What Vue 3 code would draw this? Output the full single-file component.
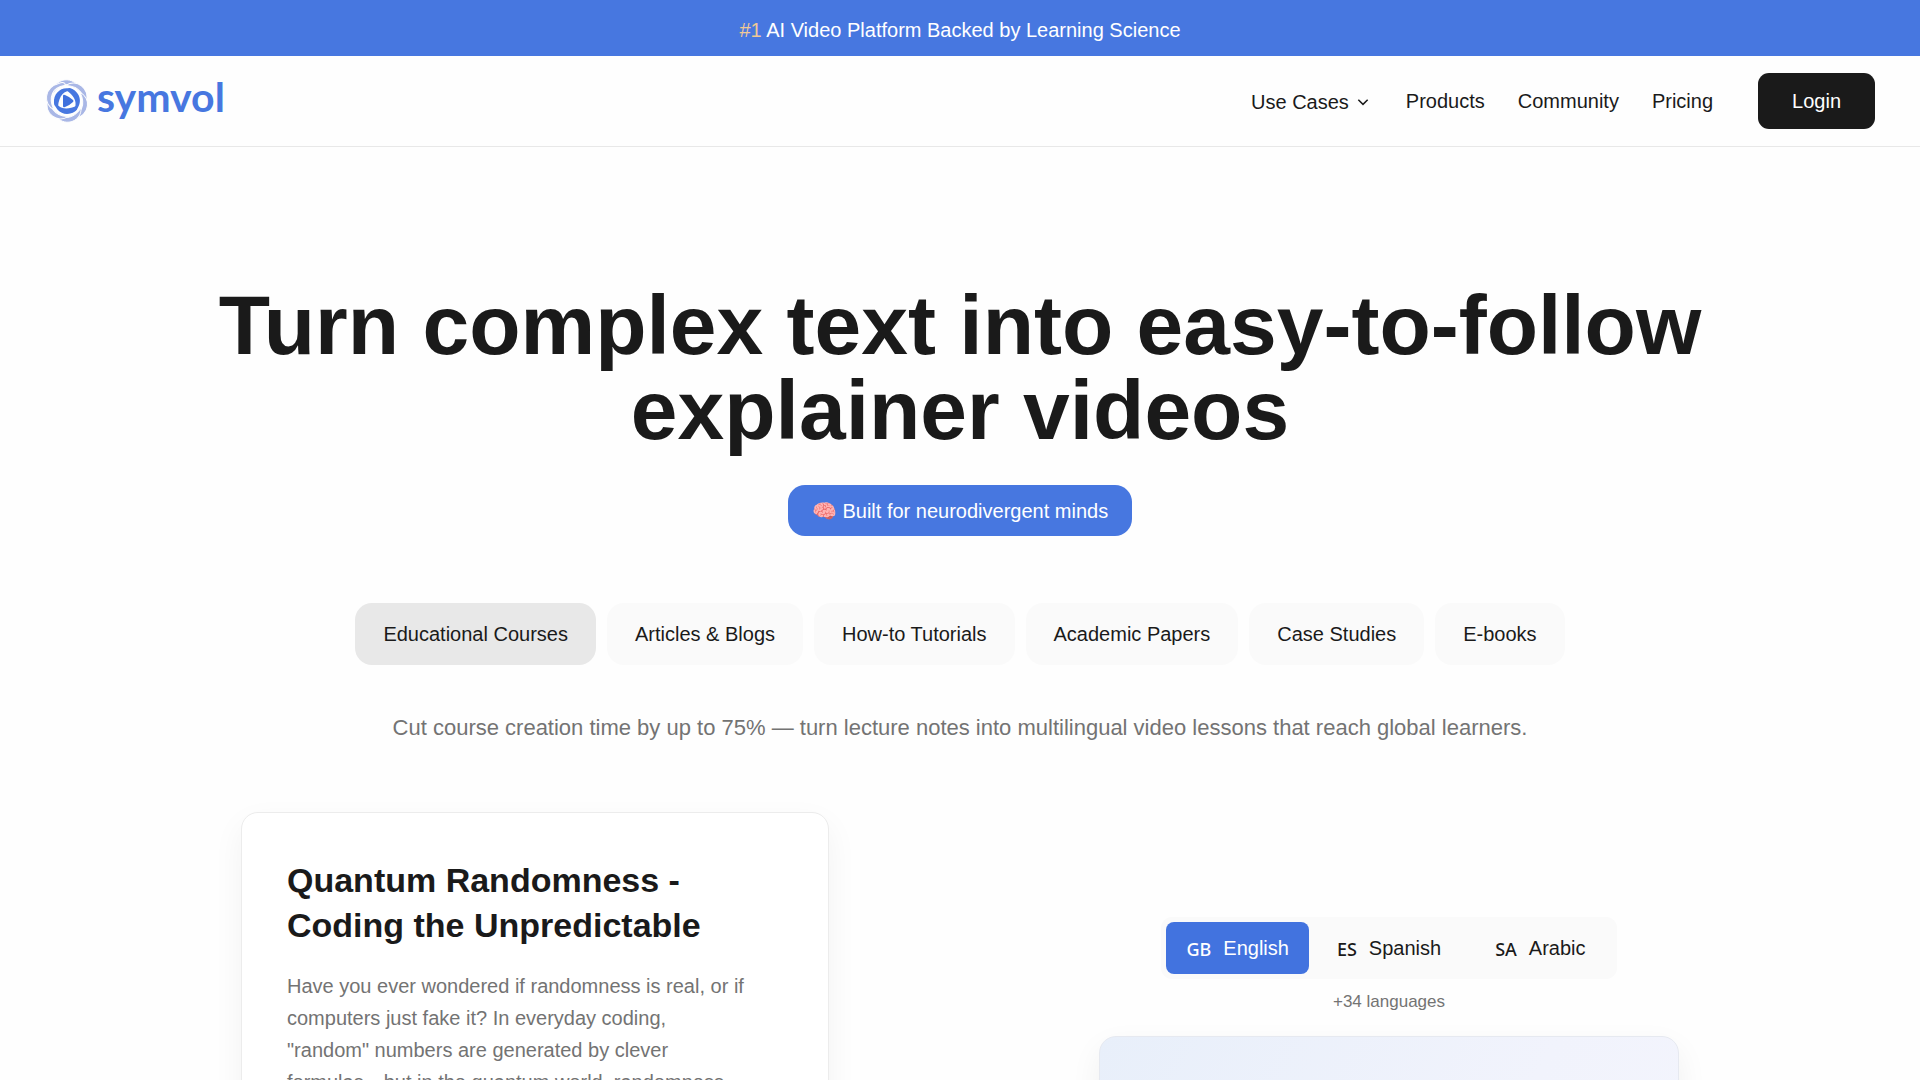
<template>
  <div class="page">
    <div class="banner">
      <p><span class="rank">#1</span> AI Video Platform Backed by Learning Science</p>
    </div>

    <header class="header">
      <a href="#" class="logo" aria-label="symvol">
        <svg class="logo-mark" viewBox="0 0 44 44" aria-hidden="true">
          <path
            v-for="angle in petals"
            :key="angle"
            d="M8 15 C7 3 22 -5 33 6 C38 10 36 13 34 12 C27 3 16 3 8 15 Z"
            fill="#a9b7e6"
            stroke="#fefefe"
            stroke-width="1"
            :transform="`rotate(${angle} 22 22)`"
          />
          <circle cx="22" cy="22" r="14" fill="#fefefe" />
          <path
            v-for="angle in blades"
            :key="angle"
            d="M9 24 C8 12 20 5 30 12 C22 10 14 14 13 28 C11 28 9 27 9 24 Z"
            fill="#4777e0"
            :transform="`rotate(${angle} 22 22)`"
          />
          <path d="M18 17 Q18 15 20 16 Q25 18 28 21 Q29 22 28 23 Q25 26 20 28 Q18 29 18 27 Z" fill="#3f70dd" />
        </svg>
        <span class="logo-text">symvol</span>
      </a>

      <nav class="nav">
        <button type="button" class="nav-link nav-drop">
          Use Cases
          <svg viewBox="0 0 12 12" aria-hidden="true">
            <path d="M2 4 L6 8 L10 4" fill="none" stroke="currentColor" stroke-width="1.3" />
          </svg>
        </button>
        <a v-for="link in links" :key="link" href="#" class="nav-link">{{ link }}</a>
        <button type="button" class="login">Login</button>
      </nav>
    </header>

    <main>
      <section class="hero">
        <h1>Turn complex text into easy-to-follow explainer videos</h1>
        <div class="badge">🧠 Built for neurodivergent minds</div>

        <div class="tabs">
          <button
            v-for="tab in tabs"
            :key="tab"
            type="button"
            :class="['tab', { active: tab === activeTab }]"
            @click="activeTab = tab"
          >
            {{ tab }}
          </button>
        </div>

        <p class="summary">
          Cut course creation time by up to 75% — turn lecture notes into multilingual video lessons that reach global learners.
        </p>
      </section>

      <section class="demo">
        <article class="card">
          <h2>Quantum Randomness - Coding the Unpredictable</h2>
          <p>
            Have you ever wondered if randomness is real, or if computers just fake it? In everyday coding,
            "random" numbers are generated by clever formulas—but in the quantum world, randomness
          </p>
        </article>

        <div class="preview">
          <div class="languages">
            <button
              v-for="lang in languages"
              :key="lang.code"
              type="button"
              :class="['language', { active: lang.code === activeLang }]"
              @click="activeLang = lang.code"
            >
              <span class="code">{{ lang.code }}</span>
              {{ lang.name }}
            </button>
          </div>
          <p class="more">+34 languages</p>
          <div class="video"></div>
        </div>
      </section>
    </main>
  </div>
</template>

<script setup>
import { ref } from 'vue'

const petals = [0, 60, 120, 180, 240, 300]
const blades = [0, 120, 240]
const links = ['Products', 'Community', 'Pricing']
const tabs = [
  'Educational Courses',
  'Articles & Blogs',
  'How-to Tutorials',
  'Academic Papers',
  'Case Studies',
  'E-books'
]
const languages = [
  { code: 'GB', name: 'English' },
  { code: 'ES', name: 'Spanish' },
  { code: 'SA', name: 'Arabic' }
]

const activeTab = ref('Educational Courses')
const activeLang = ref('GB')
</script>

<style>
body {
  margin: 0;
  background: #fefefe;
}
</style>

<style scoped>
.page {
  height: 100vh;
  overflow: hidden;
  font-family: "Liberation Sans", Arial, sans-serif;
  font-size: 20px;
  line-height: 28px;
  color: #1a1a1a;
}

h1,
h2,
p {
  margin: 0;
}

button {
  border: none;
  font: inherit;
  color: inherit;
  cursor: pointer;
}

.banner {
  padding: 16px 24px 12px;
  background: #4777e0;
  color: white;
  text-align: center;
}

.rank {
  color: #f0c896;
}

.header {
  display: flex;
  align-items: center;
  justify-content: space-between;
  padding: 17px 45px;
  border-bottom: 1px solid #e8e8e8;
}

.logo {
  display: flex;
  align-items: center;
  gap: 8px;
  color: #4777e0;
  text-decoration: none;
}

.logo-mark {
  width: 44px;
  height: 44px;
  overflow: visible;
}

.logo-text {
  font-family: Lato, sans-serif;
  font-size: 41px;
  font-weight: 700;
  line-height: 44px;
  padding-bottom: 8px;
}

.nav {
  display: flex;
  align-items: center;
  gap: 33px;
}

.nav-link {
  color: #1a1a1a;
  text-decoration: none;
}

.nav-drop {
  display: flex;
  align-items: center;
  gap: 7px;
  padding: 2px 3px 0 0;
  background: none;
}

.nav-drop svg {
  width: 14px;
  height: 14px;
}

.login {
  height: 56px;
  margin-left: 12px;
  padding: 0 34px;
  border-radius: 11px;
  background: #1a1a1a;
  color: white;
}

.hero {
  display: flex;
  flex-direction: column;
  align-items: center;
  padding: 136px 24px 0;
  text-align: center;
}

h1 {
  max-width: 1560px;
  font-size: 84px;
  line-height: 85px;
}

.badge {
  margin-top: 32px;
  padding: 12px 24px 11px;
  border-radius: 17px;
  background: #4777e0;
  color: white;
}

.tabs {
  display: flex;
  flex-wrap: wrap;
  justify-content: center;
  gap: 11px;
  margin-top: 67px;
}

.tab {
  padding: 17px 28px;
  border-radius: 17px;
  background: #fafafa;
}

.tab.active {
  background: #e8e8e8;
}

.summary {
  margin-top: 46px;
  font-size: 22px;
  line-height: 34px;
  color: #737373;
}

.demo {
  display: flex;
  justify-content: space-between;
  gap: 48px;
  max-width: 1438px;
  margin: 0 auto;
  padding-top: 67px;
}

.card {
  flex: 0 1 588px;
  box-sizing: border-box;
  min-height: 560px;
  padding: 45px;
  border: 1px solid #ececec;
  border-radius: 17px;
  background: white;
  box-shadow: 0 12px 32px rgba(0, 0, 0, 0.05);
}

.card h2 {
  font-size: 34px;
  line-height: 45px;
}

.card p {
  margin-top: 22px;
  padding-right: 34px;
  line-height: 32px;
  color: #737373;
}

.preview {
  flex: 0 1 580px;
  display: flex;
  flex-direction: column;
  align-items: center;
  padding-top: 105px;
}

.languages {
  display: flex;
  gap: 8px;
  padding: 5px;
  border-radius: 11px;
  background: #fafafa;
}

.language {
  display: flex;
  align-items: center;
  gap: 12px;
  padding: 11px 26px 11px 20px;
  border-radius: 8px;
  background: none;
}

.language.active {
  padding-right: 20px;
  background: #4273df;
  color: white;
}

.code {
  font-family: "Noto Sans", sans-serif;
  font-size: 18px;
  font-weight: 500;
  padding-top: 2px;
}

.more {
  margin-top: 11px;
  font-size: 17px;
  line-height: 24px;
  color: #737373;
}

.video {
  align-self: stretch;
  box-sizing: border-box;
  height: 330px;
  margin-top: 22px;
  border: 1px solid #e6e9f0;
  border-radius: 17px;
  background: linear-gradient(120deg, #e8effa, #f1f3fc 60%, #f4f5fd);
  box-shadow: 0 12px 32px rgba(0, 0, 0, 0.06);
}
</style>
